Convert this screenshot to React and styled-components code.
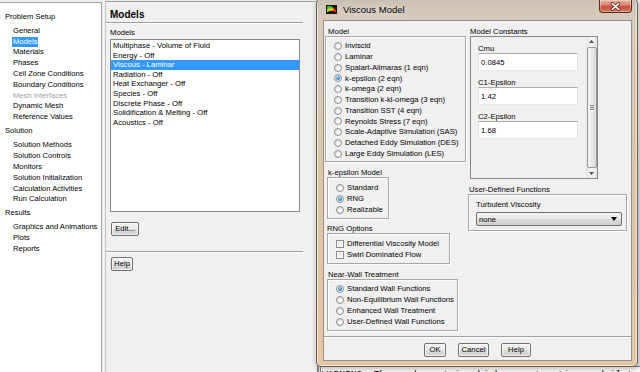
import React from "react";
import styled, { createGlobalStyle } from "styled-components";

const GlobalStyle = createGlobalStyle`
  html, body {
    margin: 0;
    padding: 0;
    background: #f0f0f0;
  }
  body {
    font-family: "Liberation Sans", Arial, sans-serif;
  }
`;

const Screen = styled.div`
  position: relative;
  width: 640px;
  height: 372px;
  overflow: hidden;
  display: flex;
  align-items: stretch;
  background: #f0f0f0;
  color: #000;
  font-family: "Liberation Sans", Arial, sans-serif;
`;

/* ---------- navigation tree ---------- */

const Tree = styled.nav`
  flex: none;
  width: 102px;
  box-sizing: border-box;
  margin-top: 2px;
  padding-top: 8.6px;
  background: #fff;
  border-top: 1px solid #a0a0a0;
  border-right: 1px solid #a0a0a0;
  font-size: 7.6px;
`;

const TreeSection = styled.div`
  & + & {
    margin-top: 3px;
  }
`;

const TreeHeading = styled.div`
  height: 10.8px;
  line-height: 10.8px;
  padding-left: 5px;
  margin-bottom: 3.5px;
  white-space: nowrap;
`;

const TreeItem = styled.div`
  height: 10.8px;
  line-height: 10.8px;
  padding-left: 12px;
  white-space: nowrap;
  color: ${(p) => (p.$disabled ? "#a3a3a3" : "#000")};
`;

const TreeLabel = styled.span`
  display: inline-block;
  padding: 0 1px;
  line-height: 10px;
  background: ${(p) => (p.$selected ? "#3399ff" : "transparent")};
  color: ${(p) => (p.$selected ? "#fff" : "inherit")};
`;

/* ---------- task page ---------- */

const TaskPage = styled.section`
  flex: none;
  width: 214px;
  box-sizing: border-box;
  margin: 1px 0 0 3px;
  padding: 7px 14px 0 4px;
  border-top: 1px solid #a0a0a0;
  border-left: 1px solid #c4c4c4;
  border-right: 2px solid #8c8c8c;
  font-size: 7.7px;
`;

const TaskTitle = styled.h2`
  margin: 0;
  height: 12px;
  font-size: 10px;
  line-height: 12px;
  font-weight: bold;
`;

const Separator = styled.div`
  height: 0;
  margin: ${(p) => p.$m || "0"};
  border-top: 1px solid #a0a0a0;
  border-bottom: 1px solid #fff;
`;

const SmallLabel = styled.div`
  height: 9px;
  line-height: 9px;
  margin-top: ${(p) => p.$top || 0}px;
  padding-left: ${(p) => p.$indent || 0}px;
  white-space: nowrap;
  font-size: 7.7px;
`;

const ListBox = styled.ul`
  list-style: none;
  margin: 2px 3px 0 0;
  padding: 1px 0 0;
  height: 173px;
  box-sizing: border-box;
  background: #fff;
  border: 1px solid #828790;
`;

const ListItem = styled.li`
  height: 9.6px;
  line-height: 9.6px;
  padding-left: 2px;
  white-space: nowrap;
  background: ${(p) => (p.$selected ? "#3399ff" : "transparent")};
  color: ${(p) => (p.$selected ? "#fff" : "#000")};
`;

const Button = styled.button`
  display: block;
  box-sizing: border-box;
  width: ${(p) => p.$w}px;
  height: 14px;
  margin: ${(p) => p.$m || "0"};
  padding: 0;
  border: 1px solid #707070;
  border-radius: 2px;
  background: linear-gradient(#f4f4f4 0%, #ebebeb 48%, #dddddd 52%, #cfcfcf 100%);
  box-shadow: inset 0 0 0 1px rgba(255, 255, 255, 0.7);
  font-family: "Liberation Sans", Arial, sans-serif;
  font-size: 7.7px;
  line-height: 12px;
  color: #000;
`;

/* ---------- workspace behind the dialog ---------- */

const Workspace = styled.div`
  flex: 1;
  min-width: 0;
  display: flex;
  flex-direction: column;
`;

const Graphics = styled.div`
  flex: none;
  height: 366px;
  background: linear-gradient(#f2f2f2 0%, #eef1f6 18%, #e0e9f6 55%, #e8eef8 100%);
`;

const Console = styled.pre`
  flex: 1;
  margin: 0 0 0 1px;
  padding: 2px 0 0 1px;
  background: #fff;
  border-top: 1px solid #7a7a7a;
  border-left: 1px solid #828790;
  font-family: "Liberation Mono", "Courier New", monospace;
  font-size: 9.6px;
  line-height: 11px;
  white-space: pre;
  overflow: hidden;
`;

/* ---------- dialog window ---------- */

const Dialog = styled.div`
  position: absolute;
  left: 316px;
  top: -3px;
  width: 322px;
  height: 370px;
  box-sizing: border-box;
  display: flex;
  flex-direction: column;
  padding: 0 5px 5px 6px;
  border: 1px solid #6f5d4c;
  border-radius: 7px 7px 5px 5px;
  background: linear-gradient(
    #c8bdb1 0px,
    #d4c9bd 12px,
    #d8cabb 24px,
    #dcc5ab 45%,
    #e3c7a7 100%
  );
  box-shadow: inset 0 0 0 1px rgba(255, 255, 255, 0.55), 1px 2px 6px rgba(0, 0, 0, 0.3);
`;

const TitleBar = styled.div`
  flex: none;
  height: 22px;
  display: flex;
  align-items: center;
  padding-left: 3px;
`;

const TitleText = styled.span`
  margin-left: 6px;
  font-size: 9.5px;
  color: #000;
  text-shadow: 0 0 6px rgba(255, 255, 255, 0.9);
`;

const CloseButton = styled.div`
  align-self: flex-start;
  margin: 2px 0 0 auto;
  width: 33px;
  height: 13px;
  box-sizing: border-box;
  display: flex;
  align-items: center;
  justify-content: center;
  border: 1px solid #5a2a20;
  border-top: none;
  border-radius: 0 0 4px 4px;
  background: linear-gradient(#eab1a1 0%, #d98a76 40%, #c8503a 55%, #d57a5f 100%);
  box-shadow: inset 0 0 0 1px rgba(255, 255, 255, 0.35);
`;

const Client = styled.div`
  flex: 1;
  display: flex;
  flex-direction: column;
  background: #f0f0f0;
  border: 1px solid #9a8f84;
  font-size: 7.7px;
`;

const Body = styled.div`
  flex: 1;
  display: flex;
  padding: 5.5px 0 0 1px;
`;

const Column = styled.div`
  flex: none;
  width: ${(p) => p.$w}px;
  margin-left: ${(p) => p.$ml || 0}px;
  display: flex;
  flex-direction: column;
`;

const Group = styled.div`
  margin-top: ${(p) => p.$top || 0}px;
`;

const GroupBox = styled.div`
  box-sizing: border-box;
  width: ${(p) => p.$w}px;
  margin-left: ${(p) => p.$ml || 0}px;
  padding: ${(p) => p.$pad};
  border: 1px solid #a7a7a7;
  box-shadow: inset 1px 1px 0 #fff, 1px 1px 0 #fff;
`;

const Option = styled.div`
  height: ${(p) => p.$h}px;
  display: flex;
  align-items: center;
  gap: 3px;
  white-space: nowrap;
  line-height: 1;
`;

const RadioMark = styled.span`
  position: relative;
  flex: none;
  width: 8px;
  height: 8px;
  box-sizing: border-box;
  border-radius: 50%;
  border: 1px solid #8e8f8f;
  background: radial-gradient(circle at 65% 65%, #ffffff 0%, #eeeeee 45%, #cfcfcf 100%);

  &::after {
    content: "";
    display: ${(p) => (p.$on ? "block" : "none")};
    position: absolute;
    left: 1px;
    top: 1px;
    width: 4px;
    height: 4px;
    border-radius: 50%;
    background: radial-gradient(circle at 35% 35%, #a6dcff 0%, #3a8ad6 45%, #124f95 100%);
  }
`;

const CheckMark = styled.span`
  flex: none;
  width: 8px;
  height: 8px;
  box-sizing: border-box;
  border: 1px solid #8e8f8f;
  background: linear-gradient(135deg, #d6d6d6 0%, #f2f2f2 60%, #ffffff 100%);
  box-shadow: inset 0 0 0 1px #f4f4f4;
`;

const ConstantsBox = styled.div`
  display: flex;
  box-sizing: border-box;
  width: 128px;
  height: 143.5px;
  margin-left: 2px;
  background: #f0f0f0;
  border: 1px solid #828790;
`;

const Fields = styled.div`
  flex: 1;
  padding: 7px 0 0 7px;
`;

const TextInput = styled.div`
  box-sizing: border-box;
  width: 100px;
  height: 18px;
  margin: 0.5px 0 6.5px;
  padding-left: 2px;
  display: flex;
  align-items: center;
  background: #fff;
  border: 1px solid #abadb3;
  border-color: #abadb3 #dbdfe6 #e3e9ef #e2e3ea;
  font-size: 7.7px;
`;

const ScrollBar = styled.div`
  flex: none;
  width: 11px;
  display: flex;
  flex-direction: column;
  align-items: center;
  background: linear-gradient(90deg, #e3e3e3, #f4f4f4 40%, #f4f4f4 60%, #e3e3e3);
`;

const ScrollArrow = styled.div`
  flex: none;
  height: 10px;
  display: flex;
  align-items: center;
  justify-content: center;
`;

const ScrollThumb = styled.div`
  flex: 1;
  width: 10px;
  box-sizing: border-box;
  display: flex;
  flex-direction: column;
  align-items: center;
  justify-content: center;
  gap: 1px;
  border: 1px solid #979797;
  border-radius: 2px;
  background: linear-gradient(90deg, #f4f4f4 0%, #e9e9e9 50%, #d8d8d8 100%);
`;

const Grip = styled.span`
  width: 4px;
  height: 1px;
  background: #707070;
  box-shadow: 0 1px 0 #fff;
`;

const Select = styled.div`
  box-sizing: border-box;
  width: 146px;
  height: 14px;
  margin-top: 3.5px;
  padding: 0 4px 0 2px;
  display: flex;
  align-items: center;
  justify-content: space-between;
  border: 1px solid #707070;
  border-radius: 2px;
  background: linear-gradient(#f2f2f2 0%, #ebebeb 48%, #dddddd 52%, #cfcfcf 100%);
`;

const Footer = styled.div`
  flex: none;
  height: 24px;
  box-sizing: border-box;
`;

const ButtonRow = styled.div`
  display: flex;
  justify-content: center;
  gap: 12px;
  margin-top: 5px;
`;

/* ---------- data ---------- */

const treeData = [
  {
    title: "Problem Setup",
    items: [
      { label: "General" },
      { label: "Models", selected: true },
      { label: "Materials" },
      { label: "Phases" },
      { label: "Cell Zone Conditions" },
      { label: "Boundary Conditions" },
      { label: "Mesh Interfaces", disabled: true },
      { label: "Dynamic Mesh" },
      { label: "Reference Values" },
    ],
  },
  {
    title: "Solution",
    items: [
      { label: "Solution Methods" },
      { label: "Solution Controls" },
      { label: "Monitors" },
      { label: "Solution Initialization" },
      { label: "Calculation Activities" },
      { label: "Run Calculation" },
    ],
  },
  {
    title: "Results",
    items: [{ label: "Graphics and Animations" }, { label: "Plots" }, { label: "Reports" }],
  },
];

const modelList = [
  "Multiphase - Volume of Fluid",
  "Energy - Off",
  "Viscous - Laminar",
  "Radiation - Off",
  "Heat Exchanger - Off",
  "Species - Off",
  "Discrete Phase - Off",
  "Solidification & Melting - Off",
  "Acoustics - Off",
];

const viscousModels = [
  "Inviscid",
  "Laminar",
  "Spalart-Allmaras (1 eqn)",
  "k-epsilon (2 eqn)",
  "k-omega (2 eqn)",
  "Transition k-kl-omega (3 eqn)",
  "Transition SST (4 eqn)",
  "Reynolds Stress (7 eqn)",
  "Scale-Adaptive Simulation (SAS)",
  "Detached Eddy Simulation (DES)",
  "Large Eddy Simulation (LES)",
];

const kEpsilonModels = ["Standard", "RNG", "Realizable"];

const wallTreatments = [
  "Standard Wall Functions",
  "Non-Equilibrium Wall Functions",
  "Enhanced Wall Treatment",
  "User-Defined Wall Functions",
];

const constants = [
  { label: "Cmu", value: "0.0845" },
  { label: "C1-Epsilon", value: "1.42" },
  { label: "C2-Epsilon", value: "1.68" },
];

function FluentIcon() {
  return (
    <svg width="11" height="9" viewBox="0 0 11 9">
      <rect width="11" height="9" fill="#141414" />
      <path d="M1 4.2 C3 2.2 6 2.8 8.2 3.6 L8 6.2 C5.5 5.2 3 6 1 7.2 Z" fill="#e6d200" />
      <path d="M1 1.6 C3 0.8 5.5 1 7.2 2.2 L6.4 3.8 C4.4 2.9 2.5 3.4 1 4.6 Z" fill="#2cbf38" />
      <path d="M7.4 3.2 C8.8 3.3 9.6 4 10 4.8 L10 7.2 C9.1 6.6 8.2 6.4 7.2 6.4 Z" fill="#e22a1c" />
    </svg>
  );
}

function CloseIcon() {
  return (
    <svg width="11" height="9" viewBox="0 0 11 9">
      <path d="M2.3 1.6 L8.7 7.4 M8.7 1.6 L2.3 7.4" stroke="#4e1c12" strokeWidth="3.2" strokeLinecap="round" />
      <path d="M2.3 1.6 L8.7 7.4 M8.7 1.6 L2.3 7.4" stroke="#fff" strokeWidth="1.7" strokeLinecap="round" />
    </svg>
  );
}

function Arrow({ down }) {
  return (
    <svg width="5" height="3" viewBox="0 0 5 3">
      <path d={down ? "M0 0 H5 L2.5 3 Z" : "M0 3 H5 L2.5 0 Z"} fill="#4d4d4d" />
    </svg>
  );
}

export default function App() {
  return (
    <>
      <GlobalStyle />
      <Screen>
        <Tree>
          {treeData.map((section) => (
            <TreeSection key={section.title}>
              <TreeHeading>{section.title}</TreeHeading>
              {section.items.map((item) => (
                <TreeItem key={item.label} $disabled={item.disabled}>
                  <TreeLabel $selected={item.selected}>{item.label}</TreeLabel>
                </TreeItem>
              ))}
            </TreeSection>
          ))}
        </Tree>

        <TaskPage>
          <TaskTitle>Models</TaskTitle>
          <Separator $m="1px 0 0 -4px" />
          <SmallLabel $top={4}>Models</SmallLabel>
          <ListBox>
            {modelList.map((m, i) => (
              <ListItem key={m} $selected={i === 2}>
                {m}
              </ListItem>
            ))}
          </ListBox>
          <Button $w={28} $m="10px 0 0 1px">
            Edit...
          </Button>
          <Separator $m="15px 0 0 -4px" />
          <Button $w={22} $m="4px 0 0 1px">
            Help
          </Button>
        </TaskPage>

        <Workspace>
          <Graphics />
          <Console>WARNING: The mesh contains high aspect ratio quadrilaterals.</Console>
        </Workspace>

        <Dialog>
          <TitleBar>
            <FluentIcon />
            <TitleText>Viscous Model</TitleText>
            <CloseButton>
              <CloseIcon />
            </CloseButton>
          </TitleBar>

          <Client>
            <Body>
              <Column $w={141}>
                <Group>
                  <SmallLabel $indent={3}>Model</SmallLabel>
                  <GroupBox $w={141} $pad="4.3px 0 2.3px 8px">
                    {viscousModels.map((m, i) => (
                      <Option key={m} $h={10.76}>
                        <RadioMark $on={i === 3} />
                        {m}
                      </Option>
                    ))}
                  </GroupBox>
                </Group>

                <Group $top={5.5}>
                  <SmallLabel $indent={3}>k-epsilon Model</SmallLabel>
                  <GroupBox $w={62} $ml={2} $pad="4.5px 0 2.5px 8px">
                    {kEpsilonModels.map((m, i) => (
                      <Option key={m} $h={11}>
                        <RadioMark $on={i === 1} />
                        {m}
                      </Option>
                    ))}
                  </GroupBox>
                </Group>

                <Group $top={5.5}>
                  <SmallLabel $indent={2}>RNG Options</SmallLabel>
                  <GroupBox $w={123} $ml={2} $pad="4.5px 0 2.5px 8px">
                    <Option $h={11}>
                      <CheckMark />
                      Differential Viscosity Model
                    </Option>
                    <Option $h={11}>
                      <CheckMark />
                      Swirl Dominated Flow
                    </Option>
                  </GroupBox>
                </Group>

                <Group $top={6}>
                  <SmallLabel $indent={3}>Near-Wall Treatment</SmallLabel>
                  <GroupBox $w={131} $ml={2} $pad="3.5px 0 2.5px 8px">
                    {wallTreatments.map((m, i) => (
                      <Option key={m} $h={11}>
                        <RadioMark $on={i === 0} />
                        {m}
                      </Option>
                    ))}
                  </GroupBox>
                </Group>
              </Column>

              <Column $w={159} $ml={2}>
                <Group>
                  <SmallLabel $indent={2}>Model Constants</SmallLabel>
                  <ConstantsBox>
                    <Fields>
                      {constants.map((c) => (
                        <div key={c.label}>
                          <SmallLabel>{c.label}</SmallLabel>
                          <TextInput>{c.value}</TextInput>
                        </div>
                      ))}
                    </Fields>
                    <ScrollBar>
                      <ScrollArrow>
                        <Arrow />
                      </ScrollArrow>
                      <ScrollThumb>
                        <Grip />
                        <Grip />
                        <Grip />
                      </ScrollThumb>
                      <ScrollArrow>
                        <Arrow down />
                      </ScrollArrow>
                    </ScrollBar>
                  </ConstantsBox>
                </Group>

                <Group $top={5.5}>
                  <SmallLabel $indent={1}>User-Defined Functions</SmallLabel>
                  <GroupBox $w={159} $pad="5px 0 4px 7px">
                    <SmallLabel>Turbulent Viscosity</SmallLabel>
                    <Select>
                      <span>none</span>
                      <svg width="6" height="4" viewBox="0 0 6 4">
                        <path d="M0 0 H6 L3 4 Z" fill="#000" />
                      </svg>
                    </Select>
                  </GroupBox>
                </Group>
              </Column>
            </Body>

            <Footer>
              <Separator />
              <ButtonRow>
                <Button $w={22}>OK</Button>
                <Button $w={31}>Cancel</Button>
                <Button $w={30}>Help</Button>
              </ButtonRow>
            </Footer>
          </Client>
        </Dialog>
      </Screen>
    </>
  );
}
